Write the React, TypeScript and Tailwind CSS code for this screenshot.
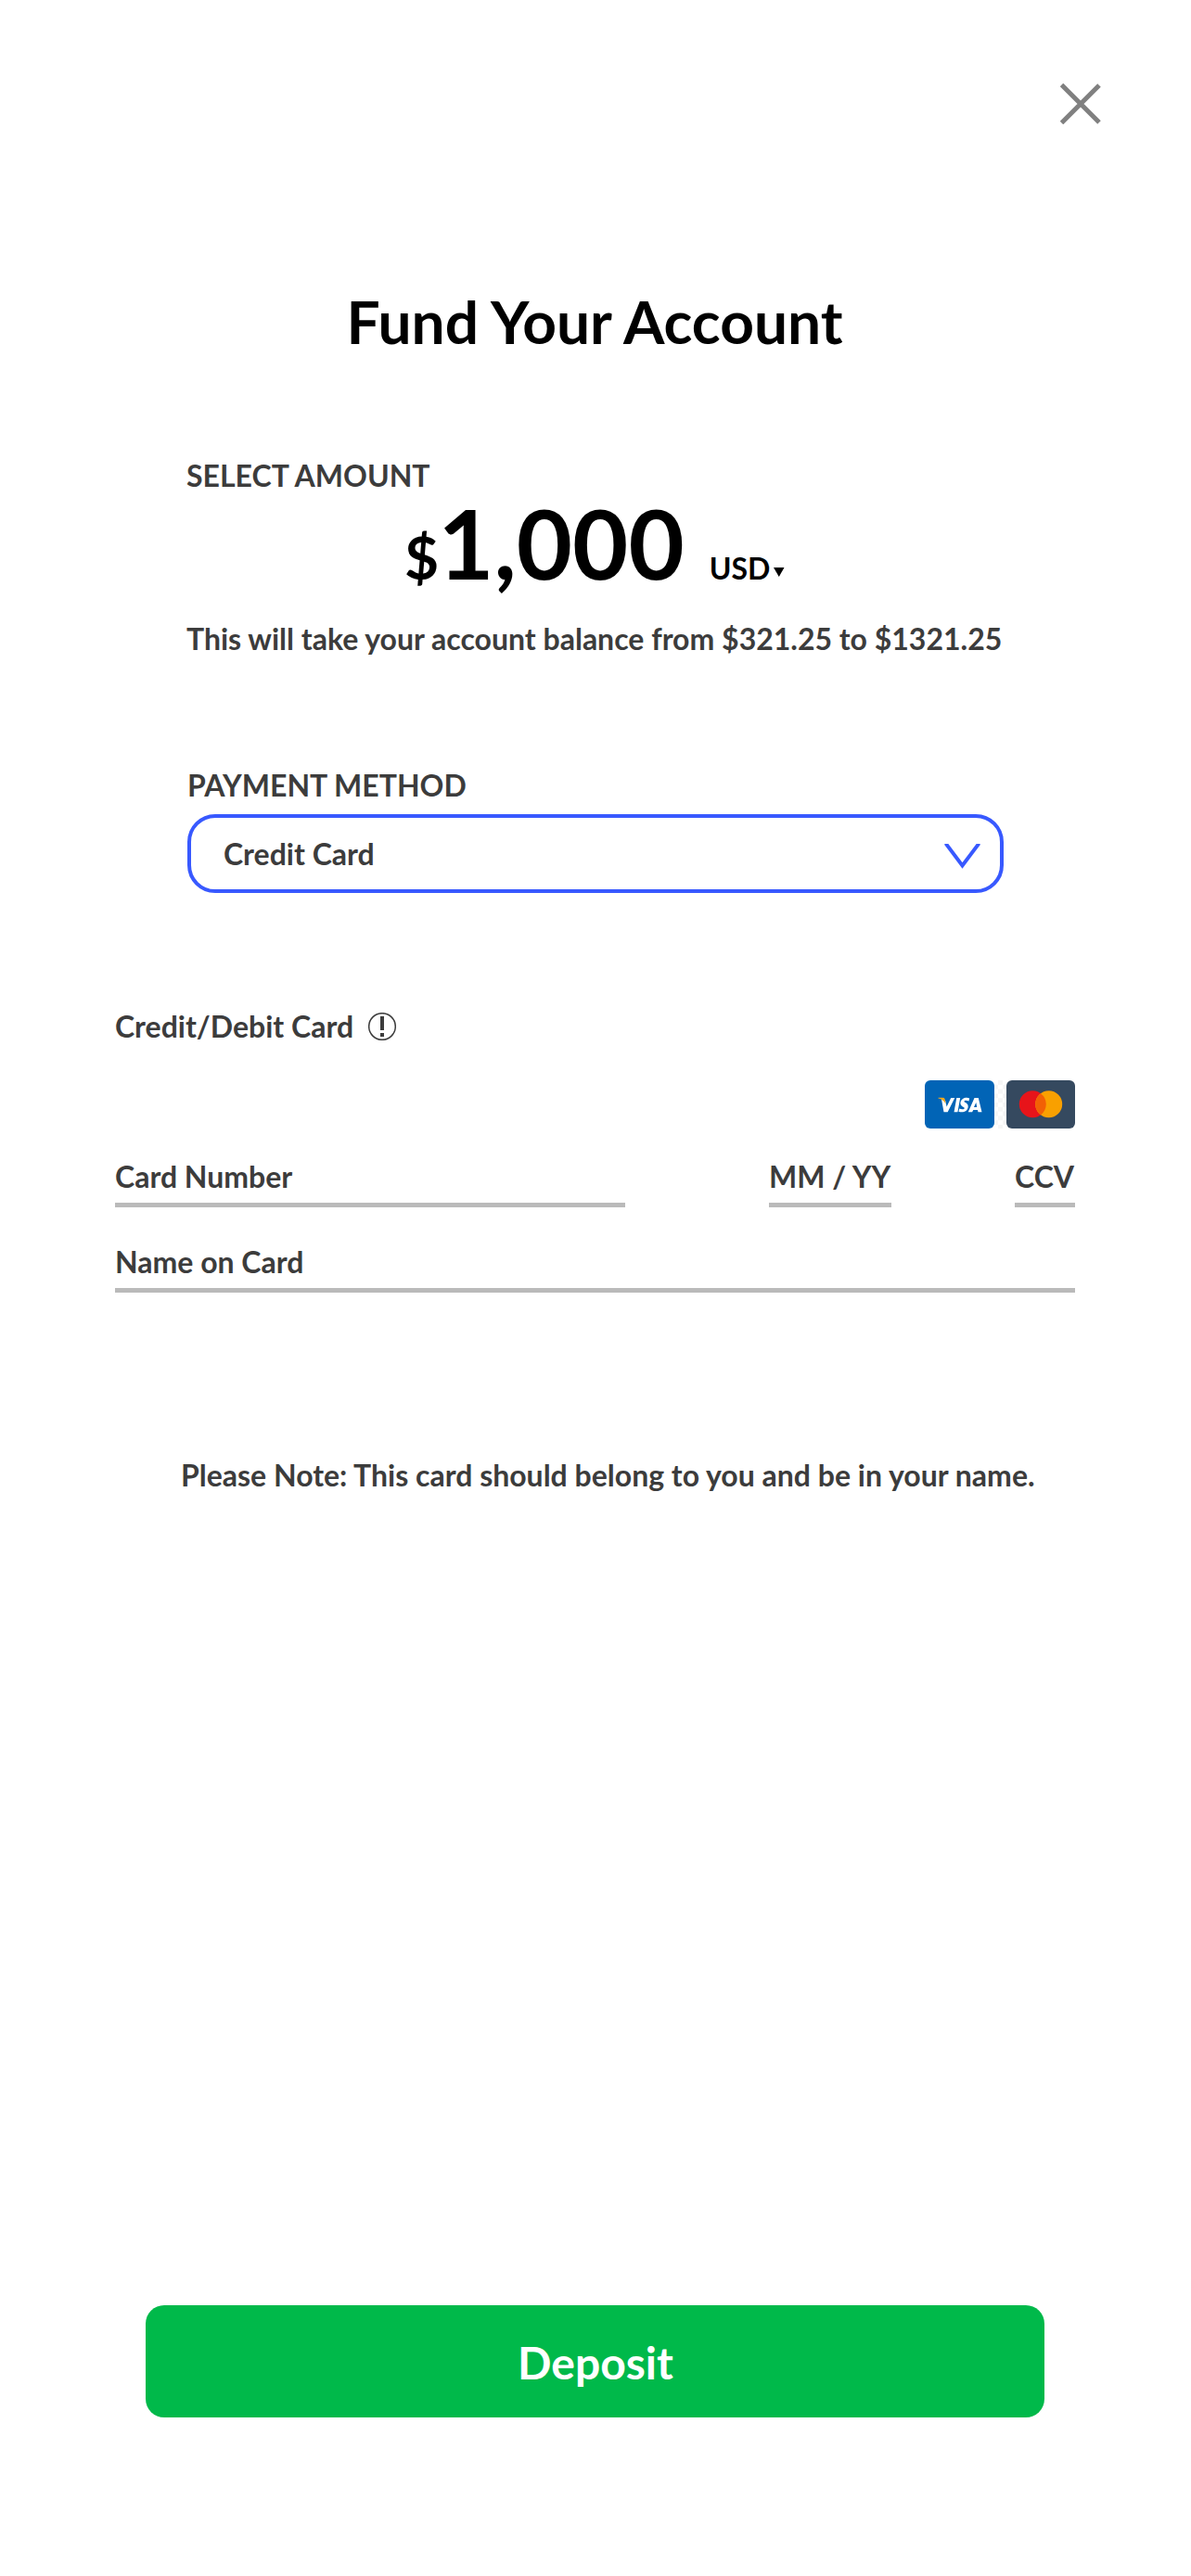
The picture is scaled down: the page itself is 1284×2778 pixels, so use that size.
import type { ReactNode } from "react";

function Field({ label, className }: { label: ReactNode; className: string }) {
  return (
    <div className={`h-[53px] border-b-[5px] border-[#bababa] whitespace-nowrap ${className}`}>
      {label}
    </div>
  );
}

function VisaCard() {
  return (
    <svg width="75" height="52" viewBox="0 0 75 52" aria-label="Visa">
      <rect width="75" height="52" rx="6" fill="#0164b6" />
      <g transform="translate(.5 0)">
        <g fill="#fff">
          <path d="M17.500 20.500l4.200 1.500 1.400 6.500 4.600-9.500h4.100l-7.600 15.300h-4.200z" />
          <path d="M33.800 19h3.900l-2.800 15.300h-3.900z" />
          <path d="M47.700 19.400l-.7 3.100c-2.300-1-4.900-1-5 .3 0 1.300 4.500 1.800 4.200 5.600-.3 5-5.500 7-10.200 5.400l.7-3.300c2.300 1.100 5.300 1.200 5.500-.3.100-1.600-4.500-1.800-4.300-5.600.4-5 5.900-6.700 9.800-5.200z" />
          <path fillRule="evenodd" d="M53 19h4.300l3.700 15.300h-4l-.5-2.300h-4.700l-1.200 2.300h-4.300zm1.800 4.900-2.300 5h3.200z" />
        </g>
        <path d="M14 18.800h4.800c1.400 0 2.100.6 2.400 1.900l.9 5c-1.400-3.200-3.800-5.400-8.100-6.300z" fill="#f3a81c" />
      </g>
    </svg>
  );
}

function CheckerGap() {
  const rows = Array.from({ length: 11 }, (_, i) => i);
  return (
    <svg width="13" height="52" viewBox="0 0 13 52" fill="#f6f6f6">
      {rows.map((row) =>
        row % 2 === 0 ? (
          <rect key={row} x="4" y={row * 4.8} width="5" height="4.8" />
        ) : (
          <path key={row} d={`M-1 ${row * 4.8}h5v4.800h-5zM9 ${row * 4.8}h5v4.800h-5z`} />
        ),
      )}
    </svg>
  );
}

function MastercardCard() {
  return (
    <svg width="74" height="52" viewBox="0 0 74 52" aria-label="Mastercard">
      <rect width="74" height="52" rx="6" fill="#35495f" />
      <circle cx="28.300" cy="25.800" r="14.500" fill="#e7141a" />
      <circle cx="45.700" cy="25.800" r="14.500" fill="#f9a000" />
      <path d="M37 14.200a14.500 14.500 0 0 1 0 23.200a14.500 14.500 0 0 1 0-23.200z" fill="#f26005" />
    </svg>
  );
}

export default function App() {
  return (
    <main className="flex h-[2778px] w-[1284px] flex-col bg-white font-['Lato',sans-serif] text-[32px] leading-[40px] font-bold text-[#3c3c3c]">
      <header className="flex justify-end pt-[90px] pr-[97px]">
        <button aria-label="Close" className="h-[44px] w-[44px]">
          <svg width="44" height="44" viewBox="0 0 44 44" stroke="#808080" strokeWidth="5">
            <path d="M1.500 1.500L42 42M42 2L1.500 42.500" />
          </svg>
        </button>
      </header>

      <h1 className="mt-[173px] pr-[2px] text-center text-[64px] leading-[80px] text-black">Fund Your Account</h1>

      <section className="mt-[106px] ml-[201px] w-[881px]">
        <h2>SELECT AMOUNT</h2>
        <div className="mt-[-8px] ml-[235px] flex h-[120px] items-baseline leading-[120px] whitespace-nowrap text-black">
          <span className="text-[64px]">$</span>
          <span className="-ml-px text-[104px]">1,000</span>
          <span className="ml-[27px] text-[32px]">USD</span>
          <svg className="ml-[4px]" width="12" height="13" viewBox="0 0 12 13">
            <path d="M0 0h11.500L5.800 10z" />
          </svg>
        </div>
        <p className="mt-[24px] whitespace-nowrap">This will take your account balance from $321.25 to $1321.25</p>
      </section>

      <section className="mt-[118px] ml-[202px] w-[880px]">
        <h2>PAYMENT METHOD</h2>
        <div className="mt-[11px] flex h-[85px] items-center justify-between rounded-[30px] border-4 border-[#3859ff] pr-[21px] pl-[35px]">
          <span>Credit Card</span>
          <svg className="mt-[5px]" width="39" height="27" viewBox="0 0 39 27" fill="none" stroke="#3859ff" strokeWidth="4">
            <path d="M1.500 -.5L19.500 23.500L37.500 -.5" />
          </svg>
        </div>
      </section>

      <section className="mt-[124px] ml-[124px] w-[1035px]">
        <div className="flex h-[40px] items-center">
          <h2>Credit/Debit Card</h2>
          <svg className="ml-[16px]" width="30" height="30" viewBox="0 0 30 30">
            <circle cx="15" cy="15" r="14.300" fill="none" stroke="#3c3c3c" strokeWidth="1.500" />
            <path d="M13 4h4v15h-4zM13 22h4v4h-4z" fill="#3c3c3c" />
          </svg>
        </div>
        <div className="mt-[38px] flex justify-end">
          <VisaCard />
          <CheckerGap />
          <MastercardCard />
        </div>
        <div className="mt-[32px] flex">
          <Field label="Card Number" className="w-[550px]" />
          <Field label="MM / YY" className="ml-[155px] w-[132px]" />
          <Field label="CCV" className="ml-[133px] w-[65px]" />
        </div>
        <Field label="Name on Card" className="mt-[39px]" />
      </section>

      <p className="mt-[177px] ml-[195px] whitespace-nowrap">
        Please Note: This card should belong to you and be in your name.
      </p>

      <button className="mt-[875px] ml-[157px] h-[121px] w-[969px] rounded-[20px] bg-[#00b94a] pt-[2px] pl-px text-[48px] leading-[60px] text-white">
        Deposit
      </button>
    </main>
  );
}
